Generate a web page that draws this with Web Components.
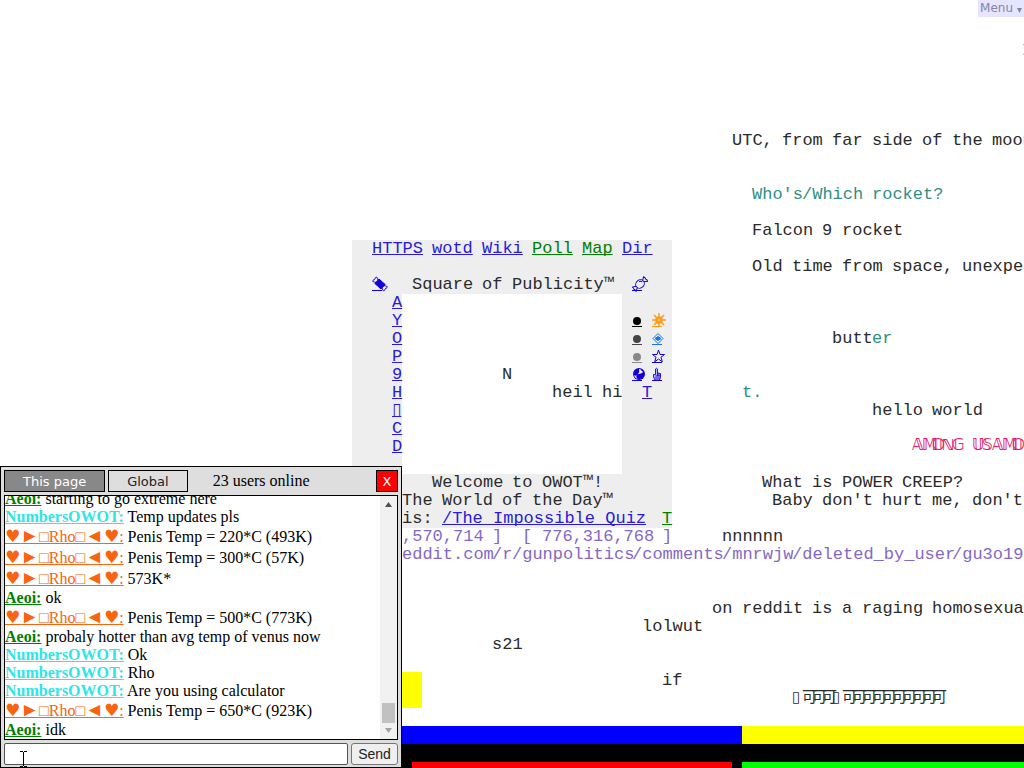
<!DOCTYPE html>
<html lang="en">
<head>
<meta charset="utf-8">
<title>Our World of Text</title>
<style>
    html, body { margin: 0; height: 100%; }
    body { overflow: hidden; background: #fff; color: #000; font-family: "Liberation Serif", "DejaVu Sans", serif; }
</style>
</head>
<body>
<world-view>
    <!-- public square -->
    <world-block row="15" col="37" w="32" h="16" color="#eee"></world-block>
    <world-block row="18" col="42" w="22" h="10" color="#fff"></world-block>
    <world-text row="15" col="39" href="#https">HTTPS</world-text>
    <world-text row="15" col="45" href="#wotd">wotd</world-text>
    <world-text row="15" col="50" href="#wiki">Wiki</world-text>
    <world-text row="15" col="55" href="#poll" color="green">Poll</world-text>
    <world-text row="15" col="60" href="#map" color="green">Map</world-text>
    <world-text row="15" col="64" href="#dir">Dir</world-text>
    <world-icon row="17" col="39" name="candy"></world-icon>
    <world-text row="17" col="43">Square of Publicity™</world-text>
    <world-icon row="17" col="65" name="sweet"></world-icon>

    <world-text row="18" col="41" href="#a">A</world-text>
    <world-text row="19" col="41" href="#y">Y</world-text>
    <world-text row="20" col="41" href="#o">O</world-text>
    <world-text row="21" col="41" href="#p">P</world-text>
    <world-text row="22" col="41" href="#9">9</world-text>
    <world-text row="23" col="41" href="#h">H</world-text>
    <world-text row="24" col="41" href="#box">▯</world-text>
    <world-text row="25" col="41" href="#c">C</world-text>
    <world-text row="26" col="41" href="#d">D</world-text>

    <world-icon row="19" col="65" name="dot" color="#000"></world-icon>
    <world-icon row="20" col="65" name="dot" color="#444"></world-icon>
    <world-icon row="21" col="65" name="dot" color="#888"></world-icon>
    <world-icon row="22" col="65" name="yinyang"></world-icon>
    <world-icon row="19" col="67" name="sun" color="#ff9a1a"></world-icon>
    <world-icon row="20" col="67" name="diamond" color="#1a74e8"></world-icon>
    <world-icon row="21" col="67" name="star"></world-icon>
    <world-icon row="22" col="67" name="hand"></world-icon>
    <world-text row="23" col="66" href="#t">T</world-text>

    <world-text row="22" col="52">N</world-text>
    <world-text row="23" col="57">heil hi</world-text>
    <world-text row="28" col="45">Welcome to OWOT™!</world-text>
    <world-text row="29" col="42">The World of the Day™</world-text>
    <world-text row="30" col="42">is:</world-text>
    <world-text row="30" col="46" href="#quiz">/The_Impossible_Quiz</world-text>
    <world-text row="30" col="68" href="#t2" color="green">T</world-text>
    <world-text row="31" col="42" color="#8468c8">,570,714 ]  [ 776,316,768 ]</world-text>
    <world-text row="32" col="42" color="#8468c8">eddit.com/r/gunpolitics/comments/mnrwjw/deleted_by_user/gu3o19e</world-text>

    <!-- scattered writing -->
    <world-text row="4" col="104">I</world-text>
    <world-text row="9" col="75">UTC, from far side of the moon</world-text>
    <world-text row="12" col="77" color="#2f8f82">Who's/Which rocket?</world-text>
    <world-text row="14" col="77">Falcon 9 rocket</world-text>
    <world-text row="16" col="77">Old time from space, unexpec</world-text>
    <world-text row="20" col="85">butt</world-text>
    <world-text row="20" col="89" color="#2f8f82">er</world-text>
    <world-text row="23" col="76" color="#2f8f82">t.</world-text>
    <world-text row="24" col="89">hello world</world-text>
    <world-text row="26" col="93" color="#e0206c" cells="bold">𝔸𝕄𝕆ℕ𝔾 𝕌𝕊𝔸𝕄𝕆</world-text>
    <world-text row="28" col="78">What is POWER CREEP?</world-text>
    <world-text row="29" col="79">Baby don't hurt me, don't</world-text>
    <world-text row="31" col="74">nnnnnn</world-text>
    <world-text row="35" col="73">on reddit is a raging homosexual</world-text>
    <world-text row="36" col="66">lolwut</world-text>
    <world-text row="37" col="51">s21</world-text>
    <world-text row="39" col="68">if</world-text>
    <world-text row="40" col="81" cells>▯可可可▯可可可可可可可可可可</world-text>

    <!-- painted strips -->
    <world-block row="39" col="37" w="7" h="2" color="#ff0"></world-block>
    <world-block row="42" col="1" w="75" h="1" color="#00f"></world-block>
    <world-block row="42" col="76" w="200" h="1" color="#ff0"></world-block>
    <world-block row="43" col="1" w="275" h="2" color="#000"></world-block>
    <world-block row="44" col="43" w="32" h="1" color="#f00"></world-block>
    <world-block row="44" col="76" w="200" h="1" color="#0f0"></world-block>
</world-view>

<world-menu>Menu</world-menu>

<chat-window users="23">
    <chat-message nick="Aeoi" kind="member">starting to go extreme here</chat-message>
    <chat-message nick="NumbersOWOT" kind="cyan">Temp updates pls</chat-message>
    <chat-message nick="♥►□Rho□◄♥" kind="rho">Penis Temp = 220*C (493K)</chat-message>
    <chat-message nick="♥►□Rho□◄♥" kind="rho">Penis Temp = 300*C (57K)</chat-message>
    <chat-message nick="♥►□Rho□◄♥" kind="rho">573K*</chat-message>
    <chat-message nick="Aeoi" kind="member">ok</chat-message>
    <chat-message nick="♥►□Rho□◄♥" kind="rho">Penis Temp = 500*C (773K)</chat-message>
    <chat-message nick="Aeoi" kind="member">probaly hotter than avg temp of venus now</chat-message>
    <chat-message nick="NumbersOWOT" kind="cyan">Ok</chat-message>
    <chat-message nick="NumbersOWOT" kind="cyan">Rho</chat-message>
    <chat-message nick="NumbersOWOT" kind="cyan">Are you using calculator</chat-message>
    <chat-message nick="♥►□Rho□◄♥" kind="rho">Penis Temp = 650*C (923K)</chat-message>
    <chat-message nick="Aeoi" kind="member">idk</chat-message>
</chat-window>

<script>
// Put an element on the character grid of the world.
function placeOnGrid(el) {
    const w = el.getAttribute('w') || 1;
    const h = el.getAttribute('h') || 1;
    el.style.gridArea = `${el.getAttribute('row')} / ${el.getAttribute('col')} / span ${h} / span ${w}`;
}

class WorldView extends HTMLElement {
    constructor() {
        super();
        this.attachShadow({ mode: 'open' });
        // The world is scrolled part of a cell past the window's corner
        this.shadowRoot.innerHTML = `
            <style>
                :host { display: block; height: 100vh; overflow: hidden; }
                .grid {
                    display: grid;
                    grid-auto-columns: 10px;
                    grid-auto-rows: 18px;
                    margin: -12px 0 0 -8px;
                }
            </style>
            <div class="grid"><slot></slot></div>
        `;
    }
}

class WorldBlock extends HTMLElement {
    connectedCallback() {
        this.attachShadow({ mode: 'open' });
        this.shadowRoot.innerHTML = `<style>:host { display: block; background: ${this.getAttribute('color')}; }</style>`;
        placeOnGrid(this);
    }
}

class WorldText extends HTMLElement {
    connectedCallback() {
        this.attachShadow({ mode: 'open' });
        const href = this.getAttribute('href');
        const color = this.getAttribute('color') || (href ? '#2a1ad8' : '#2b2b2b');
        this.shadowRoot.innerHTML = `
            <style>
                :host { display: block; min-width: 0; color: ${color}; }
                .line {
                    display: grid;
                    grid-auto-columns: 10px;
                    font: 17px/18px "Liberation Mono", "DejaVu Sans", "Noto Sans CJK SC", monospace;
                    white-space: pre;
                }
                .line > * { grid-row: 1; color: inherit; }
                a { text-decoration-skip-ink: none; text-decoration-thickness: 1px; }
                .cells { font-size: 15px; }
                .bold { font-weight: bold; }
            </style>
            <div class="line"></div>
        `;
        const line = this.shadowRoot.querySelector('.line');
        // Every word starts on its own cell; with "cells" every glyph does
        const single = this.hasAttribute('cells');
        if (single) { line.classList.add('cells'); }
        if (this.getAttribute('cells') === 'bold') { line.classList.add('bold'); }
        const pattern = single ? /\S/gu : /\/?[^\s/]+|\//g;
        const parts = href ? [{ 0: this.textContent, index: 0 }] : [...this.textContent.matchAll(pattern)];
        parts.forEach(part => {
            const el = document.createElement(href ? 'a' : 'span');
            if (href) { el.href = href; }
            el.textContent = part[0];
            const before = [...this.textContent.slice(0, part.index)].length;
            el.style.gridColumn = before + 1;
            line.appendChild(el);
        });
        placeOnGrid(this);
    }
}

const icons = {
    candy: `<g transform="rotate(42 8 8)" stroke="currentColor"><rect x="4" y="5" width="8" height="6" fill="currentColor"/><path d="M4 6.500 1 5q-1.500 1.500 0 3q-1.500 1.500 0 3l3-1.500M12 6.500 15 5q1.500 1.500 0 3q1.500 1.500 0 3l-3-1.500" fill="none" stroke-width=".8"/></g>`,
    sweet: `<g transform="rotate(-42 8 8)" fill="none" stroke="currentColor"><ellipse cx="8" cy="8" rx="4.500" ry="4"/><path d="M3.500 7 0 5q1 1.500 0 3q1 1.500 0 3l3.500-2M12.500 7 15.500 5q1 1.500 0 3q1 1.500 0 3l-3-2M9 5.500q2 1 2 2.500"/></g>`,
    dot: `<circle cx="5" cy="9" r="4" fill="currentColor"/>`,
    yinyang: `<circle cx="7" cy="8" r="6" fill="currentColor"/><path d="M7 3a2.500 2.500 0 0 1 0 5a2.500 2.500 0 0 0 0 5q-4 0-5-4q2 2 4-1q2-2 1-5" fill="#eee"/><circle cx="9.500" cy="6" r="1.200" fill="#eee"/><circle cx="5.500" cy="10.500" r="1" fill="currentColor"/>`,
    sun: `<g stroke="currentColor" stroke-width="1.500" fill="currentColor"><circle cx="7" cy="8" r="3"/><path d="M7 1v14M0 8h14M2 3l10 10M12 3 2 13"/></g><circle cx="7" cy="8" r="1.500" fill="#ffc25a"/>`,
    diamond: `<g fill="none" stroke="currentColor"><path d="m6 3.500 5 5-5 5-5-5z"/><path d="m6 6.500 3 2-3 2-3-2z" fill="currentColor"/></g>`,
    star: `<path d="m6.500 2 1.500 4.500h4.500L9 9.200l1.300 4.600-3.800-2.800-3.800 2.800L4 9.200.5 6.500H5z" fill="none" stroke="currentColor"/>`,
    hand: `<path d="M3.500 8V3q1-1.500 2 0v4l3 .5v4l-1 2.500H3L1.500 11V8.500h2zM3.500 10h5M5.500 7v3M7 7.500V10M3 12h5" fill="#b9b9f4" stroke="currentColor" stroke-width=".9"/>`
};

class WorldIcon extends HTMLElement {
    connectedCallback() {
        this.attachShadow({ mode: 'open' });
        const name = this.getAttribute('name');
        this.shadowRoot.innerHTML = `
            <style>
                :host { display: block; color: ${this.getAttribute('color') || '#1200d6'}; }
                a { display: block; height: 14px; color: inherit; border-bottom: 1px solid; }
                svg { display: block; overflow: visible; }
            </style>
            <a href="#${name}" aria-label="${name}"><svg width="16" height="16" viewBox="0 0 16 16">${icons[name]}</svg></a>
        `;
        placeOnGrid(this);
    }
}

class WorldMenu extends HTMLElement {
    constructor() {
        super();
        this.attachShadow({ mode: 'open' });
        this.shadowRoot.innerHTML = `
            <style>
                :host { position: fixed; top: 0; right: 0; }
                button {
                    display: flex;
                    align-items: center;
                    gap: 4px;
                    height: 17px;
                    padding: 0 2px;
                    border: 0;
                    background: #e5e5ff;
                    color: #8585a0;
                    font: 12px/17px "DejaVu Sans", sans-serif;
                }
                svg { margin-top: 3px; }
            </style>
            <button type="button"><slot></slot><svg width="5" height="5" viewBox="0 0 5 5"><path d="M0 0h5L2.500 5z" fill="currentColor"/></svg></button>
        `;
    }
}

class ChatMessage extends HTMLElement {
    connectedCallback() {
        this.attachShadow({ mode: 'open' });
        this.shadowRoot.innerHTML = `
            <style>
                :host { display: block; flex: none; line-height: 18px; white-space: nowrap; }
                :host([kind="rho"]) { line-height: 21px; height: 21px; }
                a { font-weight: bold; color: green; text-decoration-skip-ink: none; }
                .cyan { color: #2ee6e6; }
                .rho { color: #f8640f; font-weight: normal; }
                .heart { font: 17px/1 "DejaVu Sans", sans-serif; }
                .arrow { font-size: 19px; line-height: 1; }
            </style>
            <a href="#user" class="${this.getAttribute('kind')}"></a> <slot></slot>
        `;
        const link = this.shadowRoot.querySelector('a');
        link.innerHTML = `${this.getAttribute('nick')}:`
            .replace(/♥/g, '<span class="heart">♥</span>')
            .replace(/[►◄]/g, '<span class="arrow">$&</span>');
    }
}

class ChatWindow extends HTMLElement {
    constructor() {
        super();
        this.attachShadow({ mode: 'open' });
        this.shadowRoot.innerHTML = `
            <style>
                :host {
                    position: fixed;
                    left: 0;
                    bottom: 0;
                    box-sizing: border-box;
                    width: 402px;
                    padding: 3px 3px 2px;
                    border: 1px solid #000;
                    background: #dedede;
                    display: flex;
                    flex-direction: column;
                    gap: 3px;
                    font-size: 16px;
                }
                header { display: flex; align-items: center; gap: 3px; height: 22px; }
                header button {
                    box-sizing: border-box;
                    height: 22px;
                    border: 1px solid #000;
                    padding: 0 18px;
                    font: 13px "DejaVu Sans", sans-serif;
                    background: #dedede;
                    color: #222;
                }
                header .active { background: #888; color: #fff; }
                header .close { padding: 0; width: 22px; background: #f00; color: #fff; margin-left: auto; }
                .count { margin-left: 22px; }
                .log {
                    display: flex;
                    height: 243px;
                    border: 1px solid #000;
                    background: #fff;
                }
                .messages {
                    flex: 1;
                    min-width: 0;
                    overflow: hidden;
                    display: flex;
                    flex-direction: column;
                    justify-content: flex-end;
                }
                .scrollbar {
                    width: 17px;
                    background: #f1f1f1;
                    display: flex;
                    flex-direction: column;
                    align-items: center;
                    justify-content: space-between;
                    padding: 6px 0;
                    box-sizing: border-box;
                }
                .thumb { width: 13px; height: 20px; margin: auto 0 5px; background: #c1c1c1; }
                form { display: flex; gap: 3px; margin: 0; }
                input {
                    flex: 1;
                    min-width: 0;
                    box-sizing: border-box;
                    height: 22px;
                    border: 1px solid #555;
                    border-radius: 2px;
                    padding: 1px 4px;
                    background: #fff;
                }
                form button {
                    box-sizing: border-box;
                    width: 47px;
                    height: 22px;
                    padding: 0;
                    border: 1px solid #767676;
                    border-radius: 3px;
                    background: #efefef;
                    color: #222;
                    font: 14px "Liberation Sans", sans-serif;
                }
                .pointer { position: absolute; left: 19px; bottom: 0; }
            </style>
            <header>
                <button type="button" class="active">This page</button>
                <button type="button">Global</button>
                <span class="count"></span>
                <button type="button" class="close" aria-label="Close chat">X</button>
            </header>
            <div class="log">
                <div class="messages"><slot></slot></div>
                <div class="scrollbar">
                    <svg width="7" height="5" viewBox="0 0 7 5"><path d="M0 5h7L3.500 0z" fill="#505050"/></svg>
                    <div class="thumb"></div>
                    <svg width="7" height="5" viewBox="0 0 7 5"><path d="M0 0h7L3.500 5z" fill="#a3a3a3"/></svg>
                </div>
            </div>
            <form>
                <input type="text" aria-label="Chat message">
                <button type="button">Send</button>
            </form>
            <!-- mouse pointer resting over the text box -->
            <svg class="pointer" width="7" height="16" viewBox="0 0 7 16"><path d="M0 .5h3M4 .5h3M3.500 1v14M0 15.500h3M4 15.500h3" stroke="#000" fill="none"/></svg>
        `;
    }

    connectedCallback() {
        this.shadowRoot.querySelector('.count').textContent = `${this.getAttribute('users')} users online`;
    }
}

customElements.define('world-view', WorldView);
customElements.define('world-block', WorldBlock);
customElements.define('world-text', WorldText);
customElements.define('world-icon', WorldIcon);
customElements.define('world-menu', WorldMenu);
customElements.define('chat-message', ChatMessage);
customElements.define('chat-window', ChatWindow);
</script>
</body>
</html>
